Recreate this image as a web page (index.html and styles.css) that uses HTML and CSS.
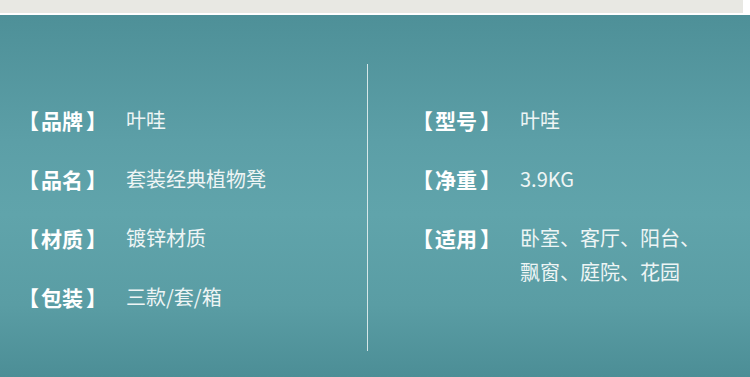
FILE: index.html
```html
<!DOCTYPE html>
<html lang="zh-CN">
<head>
<meta charset="utf-8">
<link rel="stylesheet" href="styles.css">
</head>
<body>
<div class="top-strip"></div>
<div class="panel">
  <div class="col col-left">
    <div class="row"><span class="label"><span class="lb">【</span>品牌<span class="rb">】</span></span><span class="value">叶哇</span></div>
    <div class="row"><span class="label"><span class="lb">【</span>品名<span class="rb">】</span></span><span class="value">套装经典植物凳</span></div>
    <div class="row"><span class="label"><span class="lb">【</span>材质<span class="rb">】</span></span><span class="value">镀锌材质</span></div>
    <div class="row"><span class="label"><span class="lb">【</span>包装<span class="rb">】</span></span><span class="value">三款/套/箱</span></div>
  </div>
  <div class="divider"></div>
  <div class="col col-right">
    <div class="row"><span class="label"><span class="lb">【</span>型号<span class="rb">】</span></span><span class="value">叶哇</span></div>
    <div class="row"><span class="label"><span class="lb">【</span>净重<span class="rb">】</span></span><span class="value">3.9KG</span></div>
    <div class="row"><span class="label"><span class="lb">【</span>适用<span class="rb">】</span></span><span class="value">卧室、客厅、阳台、<br>飘窗、庭院、花园</span></div>
  </div>
</div>
</body>
</html>
```

FILE: styles.css
```css
html, body {
  margin: 0;
  padding: 0;
  width: 750px;
  height: 377px;
  overflow: hidden;
  background: #ffffff;
  font-family: "Noto Sans CJK SC", "Noto Sans", sans-serif;
}
.top-strip {
  width: 743px;
  height: 13px;
  background: #e8e8e3;
  margin-bottom: 2px;
}
.panel {
  height: 362px;
  background: linear-gradient(to bottom, #4e9098 0%, #5c9fa7 35%, #60a4ab 55%, #5a9da4 80%, #4c8e96 100%);
  display: flex;
  align-items: flex-start;
  color: #f4f8f8;
}
.col {
  display: flex;
  flex-direction: column;
  gap: 25px;
  padding-top: 88px;
}
.col-left {
  width: 349px;
  padding-left: 18px;
}
.col-right {
  padding-left: 44px;
}
.divider {
  width: 1px;
  height: 287px;
  margin-top: 49px;
  background: rgba(235, 245, 245, 0.85);
}
.row {
  display: flex;
  align-items: flex-start;
  line-height: 34px;
  font-size: 20px;
}
.label {
  width: 108px;
  flex: none;
  font-weight: 700;
  font-size: 21px;
  color: #ffffff;
}
.lb {
  margin-right: 2px;
}
.rb {
  margin-left: 3px;
}
.value {
  font-weight: 400;
  color: #eef5f5;
}
```
